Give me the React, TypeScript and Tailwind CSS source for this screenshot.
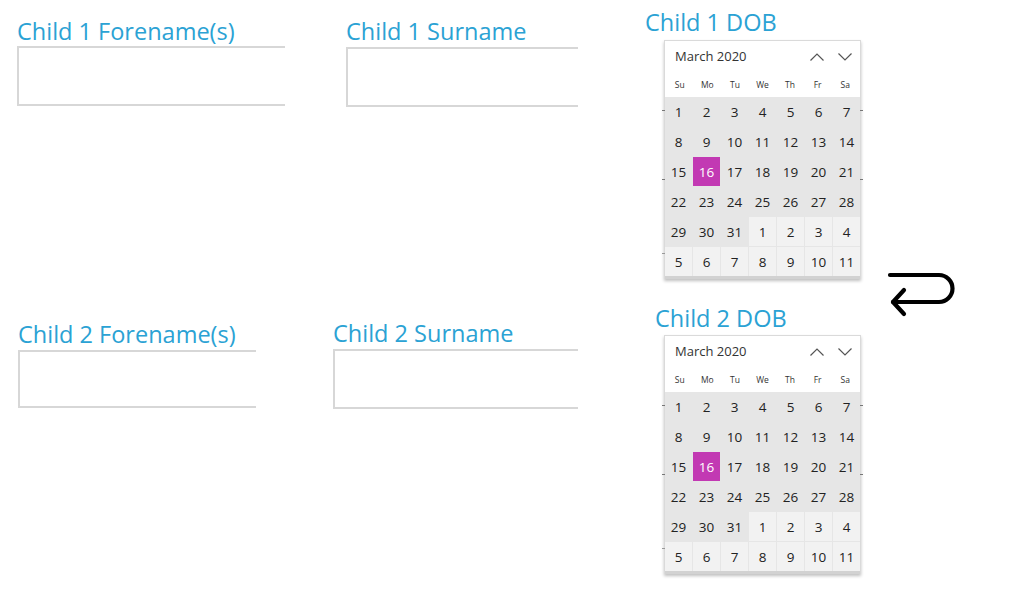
import React from "react";

const weekDays = ["Su", "Mo", "Tu", "We", "Th", "Fr", "Sa"];

// March 2020 grid followed by the first days of April
const cells: { day: number; inMonth: boolean }[] = [
  ...Array.from({ length: 31 }, (_, i) => ({ day: i + 1, inMonth: true })),
  ...Array.from({ length: 11 }, (_, i) => ({ day: i + 1, inMonth: false })),
];

const Field = ({
  label,
  width,
  boxHeight,
  gap,
  className,
}: {
  label: string;
  width: string;
  boxHeight: string;
  gap: string;
  className: string;
}) => (
  <div className={`flex flex-col ${width} ${className}`}>
    <div className="h-7 text-[23.5px] leading-7 text-[#2ba2d4] whitespace-nowrap">{label}</div>
    <div className={`${gap} ${boxHeight} border-2 border-r-0 border-[#d7d7d7] bg-white`} />
  </div>
);

const Calendar = () => (
  <div className="relative w-[197px] border border-b-0 border-[#dadada] bg-white shadow-[0_2px_3px_rgba(0,0,0,0.25)]">
    <div className="flex h-8 items-center justify-between pl-[10px] pr-[8px]">
      <span className="text-[13px] text-[#333]">March 2020</span>
      <div className="flex items-center gap-[14px]">
        <svg width="14" height="8" viewBox="0 0 14 8" fill="none" stroke="#555" strokeWidth="1.2">
          <path d="M0.5 7.5 L7 1 L13.5 7.5" />
        </svg>
        <svg width="14" height="8" viewBox="0 0 14 8" fill="none" stroke="#555" strokeWidth="1.2">
          <path d="M0.5 0.5 L7 7 L13.5 0.5" />
        </svg>
      </div>
    </div>
    <div className="grid h-6 grid-cols-7 items-center px-px">
      {weekDays.map((d) => (
        <span key={d} className="text-center text-[8.5px] text-[#333]">
          {d}
        </span>
      ))}
    </div>
    <div className="grid grid-cols-[repeat(7,27px)] grid-rows-[repeat(6,29px)] gap-px border-b-[3px] border-[#d2d2d2] bg-[#e6e6e6]">
      {cells.map((c, i) => (
        <div
          key={i}
          className={`flex items-center justify-center pt-px text-[13.5px] ${
            c.inMonth && c.day === 16
              ? "bg-[#c239b3] text-white"
              : c.inMonth
                ? "bg-[#e6e6e6] text-[#222]"
                : "bg-[#f2f2f2] text-[#222]"
          }`}
        >
          {c.day}
        </div>
      ))}
    </div>
    <span className="absolute left-[-3px] top-[69px] h-px w-[3px] bg-[#777]" />
    <span className="absolute right-[-3px] top-[69px] h-px w-[3px] bg-[#777]" />
    <span className="absolute left-[-3px] top-[138px] h-px w-[3px] bg-[#777]" />
    <span className="absolute right-[-3px] top-[138px] h-px w-[3px] bg-[#777]" />
    <span className="absolute left-[-3px] top-[212px] h-px w-[3px] bg-[#999]" />
  </div>
);

export default function App() {
  return (
    <div
      className="flex h-[589px] w-[1024px] overflow-hidden bg-white"
      style={{ fontFamily: '"Open Sans", "Noto Sans", sans-serif' }}
    >
      <div className="flex w-[870px] flex-col">
        <div className="flex h-[300px] items-start">
          <Field
            label="Child 1 Forename(s)"
            width="w-[268px]"
            boxHeight="h-[60px]"
            gap="mt-[1px]"
            className="ml-[17px] pt-[17px]"
          />
          <Field
            label="Child 1 Surname"
            width="w-[232px]"
            boxHeight="h-[60px]"
            gap="mt-[2px]"
            className="ml-[61px] pt-[17px]"
          />
          <div className="ml-[67px] flex flex-col pt-[8px]">
            <div className="h-7 text-[23.5px] leading-7 text-[#2ba2d4] whitespace-nowrap">Child 1 DOB</div>
            <div className="ml-[19px] mt-[4px]">
              <Calendar />
            </div>
          </div>
        </div>
        <div className="flex items-start">
          <Field
            label="Child 2 Forename(s)"
            width="w-[238px]"
            boxHeight="h-[58px]"
            gap="mt-[2px]"
            className="ml-[18px] pt-[20px]"
          />
          <Field
            label="Child 2 Surname"
            width="w-[245px]"
            boxHeight="h-[60px]"
            gap="mt-[2px]"
            className="ml-[77px] pt-[19px]"
          />
          <div className="ml-[77px] flex flex-col pt-[4px]">
            <div className="h-7 text-[23.5px] leading-7 text-[#2ba2d4] whitespace-nowrap">Child 2 DOB</div>
            <div className="ml-[9px] mt-[3px]">
              <Calendar />
            </div>
          </div>
        </div>
      </div>
      <div className="ml-[16px] pt-[271px]">
        <svg width="70" height="46" viewBox="0 0 70 46" fill="none" stroke="#000" strokeWidth="4.2" strokeLinecap="round" strokeLinejoin="round">
          <path d="M4 4 H53 A13.5 13.5 0 0 1 53 31 H7" />
          <path d="M18 19 L7 31 L18 43" />
        </svg>
      </div>
    </div>
  );
}
